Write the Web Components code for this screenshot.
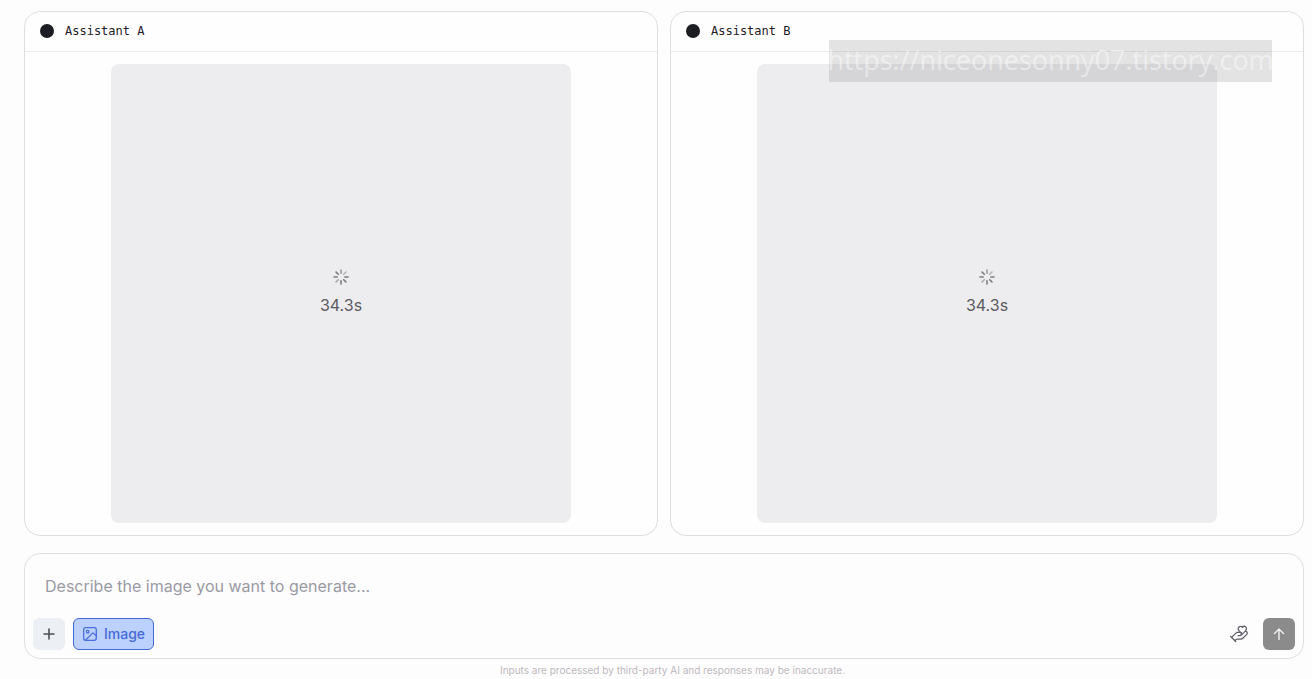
<!DOCTYPE html>
<html>
<head>
<meta charset="utf-8">
<title>Image battle</title>
<style>
  html, body { margin: 0; height: 100%; background: #fdfdfd; }
  body { font-family: Inter, "Liberation Sans", sans-serif; overflow: hidden; }
</style>
</head>
<body>
<battle-page>
  <assistant-panel name="Assistant A" time="34.3s"></assistant-panel>
  <assistant-panel name="Assistant B" time="34.3s"></assistant-panel>
  <prompt-box slot="prompt" placeholder="Describe the image you want to generate..."></prompt-box>
  <span slot="note">Inputs are processed by third-party AI and responses may be inaccurate.</span>
</battle-page>
<water-mark>https://niceonesonny07.tistory.com</water-mark>

<script>
const pageTemplate = document.createElement("template");
pageTemplate.innerHTML = `
  <style>
    :host {
      display: grid;
      grid-template-rows: 525px 106px auto;
      row-gap: 17px;
      height: 679px;
      box-sizing: border-box;
      padding: 11px 8px 0 24px;
    }
    #panels {
      display: grid;
      grid-template-columns: 1fr 1fr;
      column-gap: 12px;
      min-height: 0;
    }
    #note {
      margin-top: -18px;
      height: 24px;
      display: flex;
      align-items: center;
      justify-content: center;
      padding-left: 17px;
      font-size: 10px;
      color: #bdb9bd;
    }
  </style>
  <div id="panels"><slot></slot></div>
  <slot name="prompt"></slot>
  <div id="note"><slot name="note"></slot></div>
`;

class BattlePage extends HTMLElement {
  constructor() {
    super();
    this.attachShadow({mode: "open"}).appendChild(pageTemplate.content.cloneNode(true));
  }
}

const panelTemplate = document.createElement("template");
panelTemplate.innerHTML = `
  <style>
    :host {
      display: grid;
      grid-template-rows: 40px 1fr;
      background-color: #fefefe;
      border: 1px solid #dfdfe2;
      border-radius: 16px;
      min-height: 0;
      overflow: hidden;
    }
    header {
      display: flex;
      align-items: center;
      gap: 11px;
      padding: 0 0 1px 15px;
      border-bottom: 1px solid #ececee;
      font-family: "DejaVu Sans Mono", "Liberation Mono", monospace;
      font-size: 12px;
      color: #1f2027;
    }
    #dot {
      width: 14px;
      height: 14px;
      border-radius: 50%;
      background-color: #1c1d22;
    }
    #body {
      display: flex;
      justify-content: center;
      padding: 12px 0;
      min-height: 0;
    }
    #image {
      width: 460px;
      height: 459px;
      border-radius: 8px;
      background-color: #ededef;
      display: flex;
      flex-direction: column;
      align-items: center;
      justify-content: center;
      color: #5a5a5f;
      font-size: 16px;
      line-height: 24px;
      gap: 8px;
      box-sizing: border-box;
      padding-bottom: 2px;
    }
    svg { display: block; }
  </style>
  <header><div id="dot"></div><span id="name"></span></header>
  <div id="body">
    <div id="image">
      <svg width="16" height="16" viewBox="0 0 16 16" fill="none" stroke="#7c7d82" stroke-width="1.6" stroke-linecap="round">
        <path d="M8 1v3.2" opacity=".75"/>
        <path d="M12.9 3.1l-2.2 2.2" opacity=".5"/>
        <path d="M15 8h-3.2"/>
        <path d="M12.9 12.9l-2.2-2.2"/>
        <path d="M8 15v-3.2"/>
        <path d="M3.1 12.9l2.2-2.2" opacity=".6"/>
        <path d="M1 8h3.2"/>
        <path d="M3.1 3.1l2.2 2.2"/>
      </svg>
      <span id="time"></span>
    </div>
  </div>
`;

class AssistantPanel extends HTMLElement {
  constructor() {
    super();
    this.attachShadow({mode: "open"}).appendChild(panelTemplate.content.cloneNode(true));
  }
  connectedCallback() {
    this.shadowRoot.getElementById("name").textContent = this.getAttribute("name");
    this.shadowRoot.getElementById("time").textContent = this.getAttribute("time");
  }
}

const promptTemplate = document.createElement("template");
promptTemplate.innerHTML = `
  <style>
    :host {
      display: grid;
      grid-template-rows: 1fr auto;
      background-color: #fdfdfd;
      border: 1px solid #dfdfe2;
      border-radius: 16px;
      padding: 8px;
      box-sizing: border-box;
    }
    #text {
      padding: 12px 12px 0;
      font-size: 16px;
      line-height: 24px;
      color: #9a9aa4;
    }
    #tools {
      display: flex;
      align-items: center;
      gap: 8px;
    }
    #spacer { flex: 1; }
    button {
      height: 32px;
      border-radius: 6px;
      border: 0;
      padding: 0;
      margin: 0;
      font: inherit;
      display: flex;
      align-items: center;
      justify-content: center;
      box-sizing: border-box;
    }
    #add { width: 32px; background-color: #eceff3; }
    #image {
      width: 81px;
      gap: 6px;
      padding-bottom: 1px;
      background-color: #bcd1fd;
      border: 1px solid #4267d8;
      color: #4569d8;
      font-size: 14px;
      font-weight: 500;
    }
    #hand { width: 32px; background: none; }
    #send { width: 32px; background-color: #8b8b8b; }
    svg { display: block; }
  </style>
  <div id="text"></div>
  <div id="tools">
    <button id="add" aria-label="Add">
      <svg width="16" height="16" viewBox="0 0 16 16" fill="none" stroke="#4f5056" stroke-width="1.6" stroke-linecap="round">
        <path d="M8 3v10M3 8h10"/>
      </svg>
    </button>
    <button id="image">
      <svg width="16" height="16" viewBox="0 0 16 16" fill="none" stroke="#4a6fdc" stroke-width="1.3" stroke-linecap="round" stroke-linejoin="round">
        <rect x="1.7" y="1.7" width="12.6" height="12.6" rx="2"/>
        <circle cx="5.7" cy="5.7" r="1.3"/>
        <path d="M14.3 10l-2.6-2.6a1 1 0 0 0-1.4 0L3.500 14.200"/>
      </svg>
      Image
    </button>
    <div id="spacer"></div>
    <button id="hand" aria-label="Donate">
      <svg width="20" height="20" viewBox="0 0 24 24" fill="none" stroke="#5f6068" stroke-width="1.5" stroke-linecap="round" stroke-linejoin="round">
        <path d="M11 14h2a2 2 0 1 0 0-4h-3c-.6 0-1.100.2-1.400.6L3 16"/>
        <path d="m7 20 1.600-1.400c.3-.4.800-.6 1.400-.6h4c1.100 0 2.100-.4 2.800-1.200l4.600-4.400a2 2 0 0 0-2.750-2.910l-4.200 3.900"/>
        <path d="m2 15 6 6"/>
        <path d="M19.500 8.500c.7-.7 1.500-1.600 1.500-2.700A2.730 2.730 0 0 0 16 4a2.780 2.780 0 0 0-5 1.800c0 1.200.8 2 1.500 2.800L16 12"/>
      </svg>
    </button>
    <button id="send" aria-label="Send">
      <svg width="16" height="16" viewBox="0 0 16 16" fill="none" stroke="#f2f2f2" stroke-width="1.4" stroke-linecap="round" stroke-linejoin="round">
        <path d="M8 13.500V3M3.500 7.500L8 3l4.500 4.500"/>
      </svg>
    </button>
  </div>
`;

class PromptBox extends HTMLElement {
  constructor() {
    super();
    this.attachShadow({mode: "open"}).appendChild(promptTemplate.content.cloneNode(true));
  }
  connectedCallback() {
    this.shadowRoot.getElementById("text").textContent = this.getAttribute("placeholder");
  }
}

const markTemplate = document.createElement("template");
markTemplate.innerHTML = `
  <style>
    /* overlay stamped on top of the page */
    :host {
      position: absolute;
      left: 829px;
      top: 40px;
      width: 443px;
      height: 42px;
      box-sizing: border-box;
      padding-bottom: 4px;
      display: flex;
      align-items: center;
      justify-content: center;
      white-space: nowrap;
      background-color: rgba(120, 120, 125, 0.2);
      color: rgba(255, 255, 255, 0.45);
      font-family: "Open Sans", sans-serif;
      font-size: 27px;
    }
  </style>
  <slot></slot>
`;

class WaterMark extends HTMLElement {
  constructor() {
    super();
    this.attachShadow({mode: "open"}).appendChild(markTemplate.content.cloneNode(true));
  }
}

customElements.define("battle-page", BattlePage);
customElements.define("assistant-panel", AssistantPanel);
customElements.define("prompt-box", PromptBox);
customElements.define("water-mark", WaterMark);
</script>
</body>
</html>
